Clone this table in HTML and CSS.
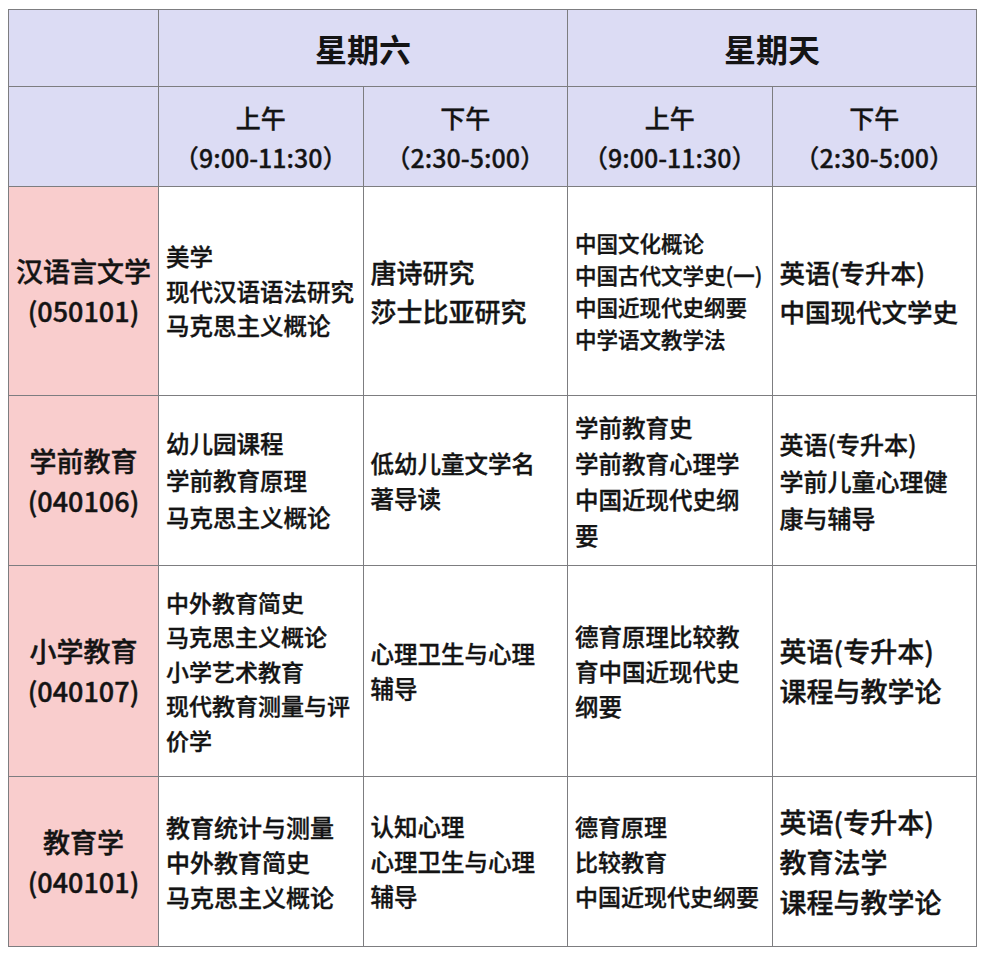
FILE: index.html
```html
<!DOCTYPE html>
<html lang="zh-CN">
<head>
<meta charset="utf-8">
<title>考试安排</title>
<link rel="stylesheet" href="styles.css">
</head>
<body>
<table class="sched">
  <colgroup>
    <col class="c-major">
    <col class="c-slot">
    <col class="c-slot">
    <col class="c-slot">
    <col class="c-slot">
  </colgroup>
  <tr class="r-day">
    <th class="hd"></th>
    <th class="hd day" colspan="2">星期六</th>
    <th class="hd day" colspan="2">星期天</th>
  </tr>
  <tr class="r-time">
    <th class="hd"></th>
    <th class="hd time">上午<br>（9:00-11:30）</th>
    <th class="hd time">下午<br>（2:30-5:00）</th>
    <th class="hd time">上午<br>（9:00-11:30）</th>
    <th class="hd time">下午<br>（2:30-5:00）</th>
  </tr>
  <tr class="r1">
    <th class="major">汉语言文学<br>(050101)</th>
    <td class="f235 l34">美学<br>现代汉语语法研究<br>马克思主义概论</td>
    <td class="f26 l39">唐诗研究<br>莎士比亚研究</td>
    <td class="f215 l32">中国文化概论<br>中国古代文学史(一)<br>中国近现代史纲要<br>中学语文教学法</td>
    <td class="f255 l39">英语(专升本)<br>中国现代文学史</td>
  </tr>
  <tr class="r2">
    <th class="major">学前教育<br>(040106)</th>
    <td class="f235 l37">幼儿园课程<br>学前教育原理<br>马克思主义概论</td>
    <td class="f235 l35">低幼儿童文学名<br>著导读</td>
    <td class="f235 l36">学前教育史<br>学前教育心理学<br>中国近现代史纲<br>要</td>
    <td class="f24 l37">英语(专升本)<br>学前儿童心理健<br>康与辅导</td>
  </tr>
  <tr class="r3">
    <th class="major">小学教育<br>(040107)</th>
    <td class="f23 l34">中外教育简史<br>马克思主义概论<br>小学艺术教育<br>现代教育测量与评<br>价学</td>
    <td class="f235 l35">心理卫生与心理<br>辅导</td>
    <td class="f235 l35">德育原理比较教<br>育中国近现代史<br>纲要</td>
    <td class="f27 l40">英语(专升本)<br>课程与教学论</td>
  </tr>
  <tr class="r4">
    <th class="major">教育学<br>(040101)</th>
    <td class="f24 l35">教育统计与测量<br>中外教育简史<br>马克思主义概论</td>
    <td class="f235 l35">认知心理<br>心理卫生与心理<br>辅导</td>
    <td class="f23 l35">德育原理<br>比较教育<br>中国近现代史纲要</td>
    <td class="f27 l40">英语(专升本)<br>教育法学<br>课程与教学论</td>
  </tr>
</table>
</body>
</html>
```

FILE: styles.css
```css
html, body {
  margin: 0;
  padding: 0;
  background: #ffffff;
}

body {
  padding: 9px 0 0 8px;
  font-family: "Noto Sans CJK SC", "Noto Sans", sans-serif;
  color: #141414;
}

.sched {
  border-collapse: collapse;
  table-layout: fixed;
  width: 968px;
}

.c-major { width: 150px; }
.c-slot { width: 204.5px; }

.sched th,
.sched td {
  border: 1px solid #7d7d80;
  padding: 0 7px;
  white-space: nowrap;
  overflow: hidden;
  vertical-align: middle;
}

.r-day { height: 77px; }
.r-time { height: 100px; }
.r1 { height: 209px; }
.r2 { height: 170px; }
.r3 { height: 211px; }
.r4 { height: 170px; }

.hd {
  background: #dcdcf4;
  text-align: center;
}

.day {
  font-size: 32px;
  font-weight: 700;
  line-height: 40px;
  padding-top: 2px;
}

.time {
  font-size: 25px;
  font-weight: 500;
  line-height: 40px;
  -webkit-text-stroke: 0.3px #141414;
}

.major {
  background: #f9cdcd;
  text-align: center;
  font-size: 27px;
  font-weight: 500;
  line-height: 40px;
  padding: 0 2px;
  -webkit-text-stroke: 0.4px #141414;
}

.sched td {
  text-align: left;
  font-weight: 500;
  background: #ffffff;
  -webkit-text-stroke: 0.35px #141414;
}

.f215 { font-size: 21.5px; }
.f23 { font-size: 23px; }
.f235 { font-size: 23.5px; }
.f24 { font-size: 24px; }
.f255 { font-size: 25.5px; }
.f26 { font-size: 26px; }
.f27 { font-size: 27px; }

.l32 { line-height: 32px; }
.l34 { line-height: 34.5px; }
.l35 { line-height: 35px; }
.l36 { line-height: 36px; }
.l37 { line-height: 37px; }
.l39 { line-height: 39px; }
.l40 { line-height: 40px; }
```
